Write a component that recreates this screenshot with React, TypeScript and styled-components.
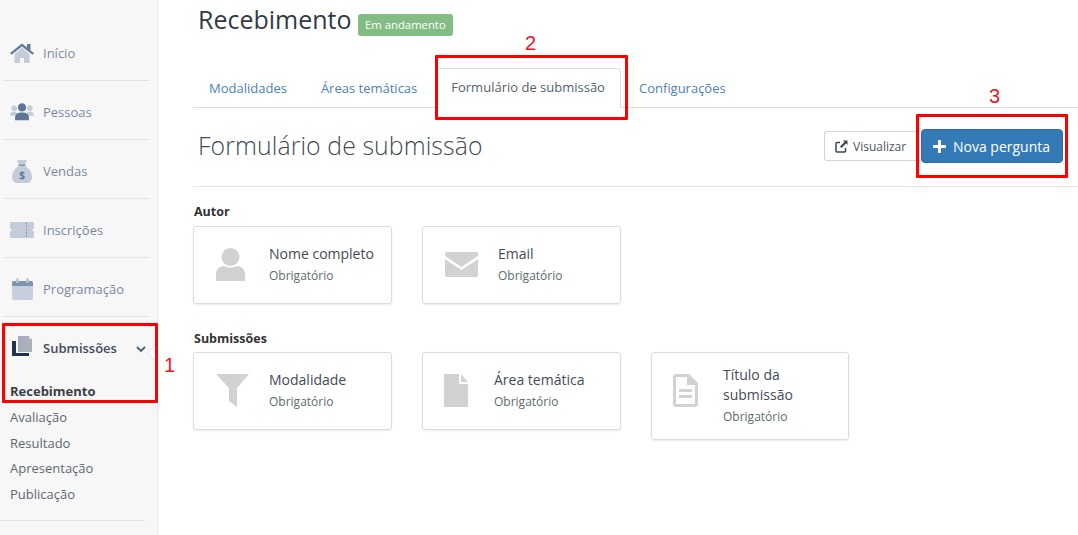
import React from 'react';
import styled, { createGlobalStyle } from 'styled-components';

const GlobalStyle = createGlobalStyle`
    html, body {
        margin: 0;
        padding: 0;
        background: #fff;
        font-family: "Open Sans", "Liberation Sans", sans-serif;
    }
    * {
        box-sizing: border-box;
    }
`;

const Page = styled.div`
    position: relative;
    width: 1078px;
    height: 535px;
    overflow: hidden;
    display: flex;
`;

const Sidebar = styled.aside`
    width: 158px;
    height: 535px;
    flex-shrink: 0;
    background: #f7f7f7;
    border-right: 1px solid #e4e8ee;
    padding-top: 22px;
`;

const NavRow = styled.div<{ $active?: boolean }>`
    height: 59px;
    margin: 0 7px 0 3px;
    padding: ${(props) => (props.$active ? '2px' : '4px')} 0 0 7px;
    display: flex;
    align-items: center;
    border-bottom: ${(props) => (props.$active ? 'none' : '1px solid #dfe4ec')};
    color: ${(props) => (props.$active ? '#3d4a5c' : '#7a8aa3')};
    font-size: 13px;
    font-weight: ${(props) => (props.$active ? 600 : 400)};
    position: relative;
`;

const NavIconSlot = styled.span`
    width: 24px;
    flex-shrink: 0;
    display: flex;
    align-items: center;
`;

const NavLabel = styled.span`
    margin-left: 9px;
`;

const Notch = styled.span`
    position: absolute;
    right: -11px;
    top: 30px;
    width: 12px;
    height: 12px;
    background: #fff;
    border-left: 1px solid #e0e5ec;
    border-bottom: 1px solid #e0e5ec;
    transform: rotate(45deg);
`;

const Chevron = styled.svg`
    position: absolute;
    right: 4px;
    top: 29px;
`;

const SubMenu = styled.div`
    margin: 2px 12px 0 10px;
    display: flex;
    flex-direction: column;
`;

const SubItem = styled.div<{ $active?: boolean }>`
    height: 25.8px;
    line-height: 26px;
    font-size: 13px;
    color: ${(props) => (props.$active ? '#3a3f47' : '#5f6874')};
    font-weight: ${(props) => (props.$active ? 700 : 400)};
`;

const SidebarEnd = styled.div`
    margin: 13px 12px 0 0;
    border-bottom: 1px solid #dfe4ec;
`;

const Main = styled.main`
    flex: 1;
    padding: 0 0 0 35px;
`;

const TitleRow = styled.div`
    height: 68px;
    padding: 3px 0 0 5px;
    display: flex;
    align-items: flex-start;
`;

const Title = styled.h1`
    margin: -1px 0 0;
    font-size: 25px;
    line-height: 34px;
    font-weight: 400;
    color: #333a44;
`;

const Badge = styled.span`
    margin: 11px 0 0 6px;
    height: 22px;
    line-height: 22px;
    padding: 0 7.5px;
    border-radius: 3px;
    background: #84bd83;
    color: #fff;
    font-size: 11.3px;
`;

const Tabs = styled.nav`
    height: 40px;
    display: flex;
    border-bottom: 1px solid #dfdfdf;
`;

const Tab = styled.div<{ $active?: boolean }>`
    height: 40px;
    line-height: 40px;
    font-size: 13px;
    margin-right: 2px;
    padding: 0 16px;
    color: #4d7fb8;
    ${(props) =>
        props.$active
            ? `padding: 0 15px;
               line-height: 37px;
               color: #555f6c;
               background: #fff;
               border: 1px solid #dfdfdf;
               border-bottom-color: #fff;
               border-radius: 4px 4px 0 0;`
            : ''}
`;

const HeaderRow = styled.div`
    height: 78px;
    margin-right: 15px;
    padding: 0 0 2px 5px;
    display: flex;
    align-items: center;
    justify-content: space-between;
`;

const PageHeading = styled.h2`
    margin: -2px 0 0;
    font-size: 24.8px;
    font-weight: 300;
    color: #434a54;
    letter-spacing: 0.1px;
`;

const Actions = styled.div`
    display: flex;
    align-items: center;
`;

const GhostButton = styled.button`
    width: 97px;
    height: 30px;
    border: 1px solid #d4d4d4;
    border-right: 0;
    border-radius: 3px 0 0 3px;
    background: #fff;
    color: #4c5561;
    font-family: inherit;
    font-size: 12px;
    display: flex;
    align-items: center;
    gap: 5px;
    padding: 0 0 0 10px;
`;

const PrimaryButton = styled.button`
    width: 142px;
    height: 34px;
    border: 1px solid #2e6da4;
    border-radius: 4px;
    background: #337ab7;
    color: #fff;
    font-family: inherit;
    font-size: 14px;
    display: flex;
    align-items: center;
    gap: 7px;
    padding: 0 0 0 11px;
`;

const Divider = styled.div`
    height: 1px;
    background: #e3e5ea;
`;

const Section = styled.section<{ $top: number }>`
    margin-top: ${(props) => props.$top}px;
`;

const SectionLabel = styled.div<{ $gap: number }>`
    font-size: 12.5px;
    line-height: 17px;
    font-weight: 700;
    color: #333;
    margin: 0 0 ${(props) => props.$gap}px 1px;
`;

const CardRow = styled.div`
    display: flex;
    gap: 30px;
    align-items: flex-start;
`;

const Card = styled.div<{ $tall?: boolean }>`
    width: ${(props) => (props.$tall ? 198 : 199)}px;
    height: ${(props) => (props.$tall ? 88 : 78)}px;
    border: 1px solid #dcdcdc;
    border-radius: 3px;
    box-shadow: 0 1px 2px rgba(0, 0, 0, 0.08);
    display: flex;
    align-items: center;
`;

const CardIcon = styled.div<{ $narrow?: boolean }>`
    width: ${(props) => (props.$narrow ? 71 : 75)}px;
    align-self: flex-start;
    padding: 21px 0 0 ${(props) => (props.$narrow ? 21 : 22)}px;
    flex-shrink: 0;
    display: flex;

    svg {
        display: block;
    }
`;

const CardBody = styled.div`
    flex: 1;
    padding-bottom: 1px;
`;

const CardTitle = styled.div`
    font-size: 14px;
    line-height: 20px;
    color: #444b55;
`;

const CardNote = styled.div`
    margin-top: 3px;
    font-size: 12px;
    line-height: 18px;
    color: #5c6b6b;
`;

const RedBox = styled.div<{ $x: number; $y: number; $w: number; $h: number }>`
    position: absolute;
    left: ${(props) => props.$x}px;
    top: ${(props) => props.$y}px;
    width: ${(props) => props.$w}px;
    height: ${(props) => props.$h}px;
    border: 3px solid #ff0000;
    border-radius: 1px;
    pointer-events: none;
`;

const Marker = styled.span<{ $x: number; $y: number }>`
    position: absolute;
    left: ${(props) => props.$x}px;
    top: ${(props) => props.$y}px;
    color: #f0141c;
    font-family: "Liberation Sans", sans-serif;
    font-size: 20px;
    line-height: 24px;
`;

const HomeIcon = () => (
    <svg width="24" height="20" viewBox="0 0 24 20">
        <path d="M12 4.500 4.500 11v9H10v-5h4v5h5.500v-9z" fill="#c3ccd8" />
        <path d="M0 10 12 0.500l5 4V1h3.500v6.500L24 10l-1.500 1.800L12 3.500 1.500 11.800z" fill="#64789a" />
    </svg>
);

const PeopleIcon = () => (
    <svg width="26" height="20" viewBox="0 0 26 20">
        <circle cx="4.500" cy="6" r="3" fill="#c3ccd8" />
        <circle cx="21.500" cy="6" r="3" fill="#c3ccd8" />
        <path d="M0 14c0-3 2-4.500 4.500-4.500S9 11 9 14zM17 14c0-3 2-4.500 4.500-4.500S26 11 26 14z" fill="#c3ccd8" />
        <circle cx="13" cy="5" r="4.500" fill="#5f7597" />
        <path d="M5.500 19v-3c0-3.500 3-5.500 7.500-5.500s7.500 2 7.500 5.500v3z" fill="#5f7597" />
    </svg>
);

const BagIcon = () => (
    <svg width="24" height="23" viewBox="0 0 24 23">
        <path d="M7 0h10l-2 5H9z" fill="#c3ccd8" />
        <path d="M9 6h6c4 2 7 7 7 11 0 3-2 6-5 6H7c-3 0-5-3-5-6 0-4 3-9 7-11z" fill="#c3ccd8" />
        <path d="M8.500 4.500h7V6h-7z" fill="#8595ad" />
        <text x="12" y="18.500" textAnchor="middle" fontSize="10" fontWeight="700" fill="#5f7597" fontFamily="Open Sans">$</text>
    </svg>
);

const TicketIcon = () => (
    <svg width="24" height="16" viewBox="0 0 24 16">
        <path d="M1 0h22a1 1 0 0 1 1 1v5.500a1.500 1.500 0 0 0 0 3V15a1 1 0 0 1-1 1H1a1 1 0 0 1-1-1V9.500a1.500 1.500 0 0 0 0-3V1a1 1 0 0 1 1-1z" fill="#c3ccd8" />
        <path d="M16.500 1v14" stroke="#7f8ba0" strokeWidth="1" strokeDasharray="1.500 1.500" />
    </svg>
);

const CalendarIcon = () => (
    <svg width="24" height="22" viewBox="0 0 24 22">
        <rect x="2" y="3" width="21" height="19" rx="2" fill="#c6cfdb" />
        <path d="M2 5a2 2 0 0 1 2-2h17a2 2 0 0 1 2 2v3H2z" fill="#7f93b0" />
        <rect x="6" y="0" width="3" height="5" rx="1.500" fill="#bcc6d3" />
        <rect x="16" y="0" width="3" height="5" rx="1.500" fill="#bcc6d3" />
    </svg>
);

const DocsIcon = () => (
    <svg width="24" height="24" viewBox="0 0 24 24">
        <path d="M2 5h4v12h13v3H2z" fill="#1f3350" />
        <path d="M8 0h11l3 3v13H8z" fill="#a9b0bb" />
        <path d="M19 0l3 3h-3z" fill="#e3e6ea" />
    </svg>
);

const PersonGlyph = () => (
    <svg width="29" height="33" viewBox="0 0 29 33">
        <circle cx="14.500" cy="9" r="9" fill="#d2d2d2" />
        <path d="M0 33v-7c0-5 4-8 8-8 4 2 9 2 13 0 4 0 8 3 8 8v7z" fill="#d2d2d2" />
    </svg>
);

const MailGlyph = () => (
    <svg width="33" height="33" viewBox="0 -4 33 33">
        <path d="M2 0h29a2 2 0 0 1 2 2v2L16.500 15 0 4V2a2 2 0 0 1 2-2z" fill="#d2d2d2" />
        <path d="M0 7l16.500 11L33 7v16a2 2 0 0 1-2 2H2a2 2 0 0 1-2-2z" fill="#d2d2d2" />
    </svg>
);

const FunnelGlyph = () => (
    <svg width="33" height="33" viewBox="0 0 33 33">
        <path d="M0 0h33L21 14v19l-8-6V14z" fill="#d2d2d2" />
    </svg>
);

const FileGlyph = () => (
    <svg width="24" height="33" viewBox="0 0 24 33">
        <path d="M0 0h15v10h9v23H0z" fill="#d2d2d2" />
        <path d="M17 0l7 8h-7z" fill="#d2d2d2" />
    </svg>
);

const FileTextGlyph = () => (
    <svg width="25" height="33" viewBox="0 0 25 33">
        <path
            fillRule="evenodd"
            d="M3 0h13l9 9v21a3 3 0 0 1-3 3H3a3 3 0 0 1-3-3V3a3 3 0 0 1 3-3zm0 3v27h19V11h-8V3z"
            fill="#d2d2d2"
        />
        <path d="M6 15h13v3H6zM6 21h13v3H6z" fill="#d2d2d2" />
    </svg>
);

const NAV_ITEMS = [
    { label: 'Início', icon: <HomeIcon /> },
    { label: 'Pessoas', icon: <PeopleIcon /> },
    { label: 'Vendas', icon: <BagIcon /> },
    { label: 'Inscrições', icon: <TicketIcon /> },
    { label: 'Programação', icon: <CalendarIcon /> },
];

const SUB_ITEMS = ['Recebimento', 'Avaliação', 'Resultado', 'Apresentação', 'Publicação'];

const TABS = ['Modalidades', 'Áreas temáticas', 'Formulário de submissão', 'Configurações'];

const FieldCard = ({
    icon,
    title,
    tall,
    narrow,
}: {
    icon: React.ReactNode;
    title: string;
    tall?: boolean;
    narrow?: boolean;
}) => (
    <Card $tall={tall}>
        <CardIcon $narrow={narrow}>{icon}</CardIcon>
        <CardBody>
            <CardTitle>{title}</CardTitle>
            <CardNote>Obrigatório</CardNote>
        </CardBody>
    </Card>
);

const App = () => {
    return (
        <Page>
            <GlobalStyle />
            <Sidebar>
                {NAV_ITEMS.map((item) => (
                    <NavRow key={item.label}>
                        <NavIconSlot>{item.icon}</NavIconSlot>
                        <NavLabel>{item.label}</NavLabel>
                    </NavRow>
                ))}
                <NavRow $active>
                    <NavIconSlot>
                        <DocsIcon />
                    </NavIconSlot>
                    <NavLabel>Submissões</NavLabel>
                    <Notch />
                    <Chevron width="10" height="7" viewBox="0 0 10 7">
                        <path d="M1 1l4 4 4-4" fill="none" stroke="#4a5b70" strokeWidth="1.800" />
                    </Chevron>
                </NavRow>
                <SubMenu>
                    {SUB_ITEMS.map((item, index) => (
                        <SubItem key={item} $active={index === 0}>
                            {item}
                        </SubItem>
                    ))}
                </SubMenu>
                <SidebarEnd />
            </Sidebar>

            <Main>
                <TitleRow>
                    <Title>Recebimento</Title>
                    <Badge>Em andamento</Badge>
                </TitleRow>
                <Tabs>
                    {TABS.map((tab, index) => (
                        <Tab key={tab} $active={index === 2}>
                            {tab}
                        </Tab>
                    ))}
                </Tabs>
                <HeaderRow>
                    <PageHeading>Formulário de submissão</PageHeading>
                    <Actions>
                        <GhostButton>
                            <svg width="13" height="13" viewBox="0 0 13 13">
                                <path d="M5 2.500H2a1 1 0 0 0-1 1V11a1 1 0 0 0 1 1h7.500a1 1 0 0 0 1-1V8" fill="none" stroke="#3f4650" strokeWidth="1.500" />
                                <path d="M8 0.500h4.500V5L11 3.500 6.500 8 5 6.500 9.500 2z" fill="#3f4650" />
                            </svg>
                            Visualizar
                        </GhostButton>
                        <PrimaryButton>
                            <svg width="13" height="13" viewBox="0 0 13 13">
                                <path d="M5 0h3v5h5v3H8v5H5V8H0V5h5z" fill="#fff" />
                            </svg>
                            Nova pergunta
                        </PrimaryButton>
                    </Actions>
                </HeaderRow>
                <Divider />
                <Section $top={16}>
                    <SectionLabel $gap={6}>Autor</SectionLabel>
                    <CardRow>
                        <FieldCard icon={<PersonGlyph />} title="Nome completo" />
                        <FieldCard icon={<MailGlyph />} title="Email" />
                    </CardRow>
                </Section>
                <Section $top={26}>
                    <SectionLabel $gap={5}>Submissões</SectionLabel>
                    <CardRow>
                        <FieldCard icon={<FunnelGlyph />} title="Modalidade" />
                        <FieldCard icon={<FileGlyph />} title="Área temática" narrow />
                        <FieldCard icon={<FileTextGlyph />} title="Título da submissão" tall narrow />
                    </CardRow>
                </Section>
            </Main>

            <RedBox $x={2} $y={323} $w={156} $h={80} />
            <RedBox $x={435} $y={55} $w={193} $h={65} />
            <RedBox $x={916} $y={114} $w={152} $h={64} />
            <Marker $x={164} $y={353}>1</Marker>
            <Marker $x={525} $y={31}>2</Marker>
            <Marker $x={989} $y={84}>3</Marker>
        </Page>
    );
};

export default App;
